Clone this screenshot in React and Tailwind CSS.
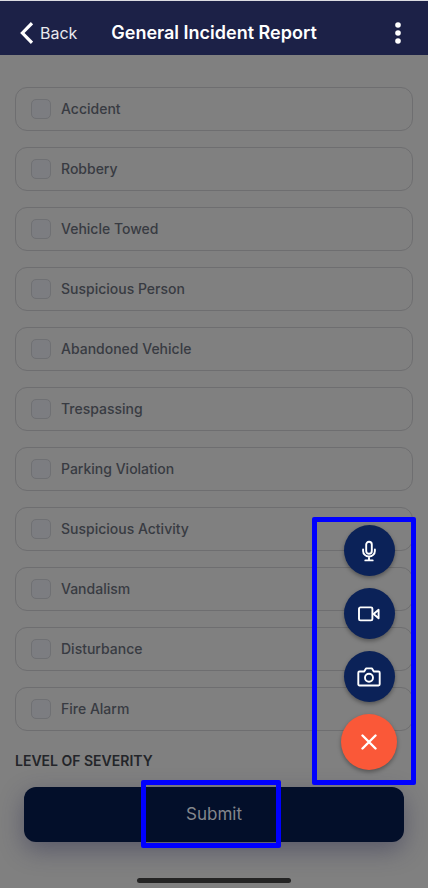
import React from "react";

const incidents = [
  "Accident",
  "Robbery",
  "Vehicle Towed",
  "Suspicious Person",
  "Abandoned Vehicle",
  "Trespassing",
  "Parking Violation",
  "Suspicious Activity",
  "Vandalism",
  "Disturbance",
  "Fire Alarm",
];

function Header() {
  return (
    <header className="grid h-[55px] grid-cols-[1fr_auto_1fr] items-center border-t border-[#dcdde2] bg-[#1c2147] pt-2.5 text-white">
      <button type="button" className="flex items-center gap-[7px] pl-5 text-[16px] leading-6 text-[#e9e9ee]">
        <svg width="13" height="22" viewBox="0 0 13 22" fill="none" stroke="white" strokeWidth="3.2" aria-hidden="true">
          <path d="M12 1.2 2.4 11l9.6 9.8" />
        </svg>
        Back
      </button>
      <h1 className="text-[18px] leading-6 font-semibold">General Incident Report</h1>
      <button type="button" aria-label="More options" className="mr-6 justify-self-end">
        <svg width="12" height="22" viewBox="0 0 12 22" fill="white" aria-hidden="true">
          <circle cx="6" cy="3" r="2.8" />
          <circle cx="6" cy="11" r="2.8" />
          <circle cx="6" cy="19" r="2.8" />
        </svg>
      </button>
    </header>
  );
}

function IncidentOption({ label }) {
  return (
    <label className="flex h-11 items-center gap-2.5 rounded-xl border border-[#6e6e70] pl-[15px] text-[14px] leading-5 font-medium text-[#383b42]">
      <input
        type="checkbox"
        className="size-5 appearance-none rounded-[5px] border border-[#6f7073] bg-[#7c7d81]"
      />
      {label}
    </label>
  );
}

const round = "flex size-[51px] items-center justify-center rounded-full bg-[#0b2258] text-white shadow-[0_2px_4px_rgba(0,0,0,0.35)]";

function ActionMenu() {
  return (
    <div className="absolute right-3 bottom-[103px] flex h-[268px] w-[104px] flex-col items-center gap-3 rounded-[2px] border-5 border-[#0000ff] pt-[3px] pl-2.5">
      <button type="button" aria-label="Record audio" className={round}>
        <svg width="16" height="22" viewBox="0 0 16 22" fill="none" stroke="currentColor" strokeWidth="1.9" strokeLinecap="round" aria-hidden="true">
          <rect x="5.2" y="1.8" width="5.6" height="12" rx="2.8" />
          <path d="M2.1 9.5v1.4a5.9 5.6 0 0 0 11.8 0V9.5M8 16.5v3.7M4.3 20.4h7.4" />
        </svg>
      </button>
      <button type="button" aria-label="Record video" className={round}>
        <svg width="22" height="16" viewBox="0 0 22 16" fill="none" stroke="currentColor" strokeWidth="1.9" strokeLinejoin="round" aria-hidden="true">
          <rect x="1" y="1.4" width="13.4" height="13" rx="1.4" />
          <path d="M15.6 8l5-4.2v8.4l-5-4.2Z" />
        </svg>
      </button>
      <button type="button" aria-label="Take photo" className={round}>
        <svg width="24" height="20" viewBox="0 0 24 20" fill="none" stroke="currentColor" strokeWidth="1.9" strokeLinejoin="round" aria-hidden="true">
          <path d="M2.5 4.5h4.7L9 1.4h6l1.8 3.1h4.7c.7 0 1.2.5 1.2 1.2v11.6c0 .7-.5 1.2-1.2 1.2h-19c-.7 0-1.2-.5-1.2-1.2V5.7c0-.7.5-1.2 1.2-1.2Z" />
          <circle cx="12" cy="10.8" r="4" />
        </svg>
      </button>
      <button
        type="button"
        aria-label="Close menu"
        className="flex size-14 shrink-0 items-center justify-center rounded-full bg-[#fa5838] text-white shadow-[0_2px_4px_rgba(0,0,0,0.35)]"
      >
        <svg width="16" height="16" viewBox="0 0 16 16" fill="none" stroke="currentColor" strokeWidth="2.4" strokeLinecap="round" aria-hidden="true">
          <path d="M1.5 1.5l13 13M14.5 1.5l-13 13" />
        </svg>
      </button>
    </div>
  );
}

export default function App() {
  return (
    <div className="relative flex min-h-screen flex-col bg-[#808080] font-['Inter','Liberation_Sans',sans-serif]">
      <Header />
      <main className="flex flex-1 flex-col px-[15px] pt-8">
        <div className="flex flex-col gap-4">
          {incidents.map((label) => (
            <IncidentOption key={label} label={label} />
          ))}
        </div>
        <h2 className="mt-5 text-[14px] leading-5 font-semibold text-[#232529]">LEVEL OF SEVERITY</h2>
      </main>
      <footer className="flex flex-col items-center px-6 pb-[5px]">
        <button
          type="button"
          className="relative flex h-[55px] w-full items-center justify-center rounded-xl bg-[#030f2a] text-[17px] text-[#84868c] shadow-[0_8px_24px_rgba(40,40,75,0.45)]"
        >
          Submit
          <span className="absolute -top-[7px] right-1.5 left-0 mx-auto h-[68px] w-[140px] rounded-[2px] border-5 border-[#0000ff]" />
        </button>
        <div className="mt-9 h-[5px] w-[154px] rounded-full bg-[#242424]" />
      </footer>
      <ActionMenu />
    </div>
  );
}
